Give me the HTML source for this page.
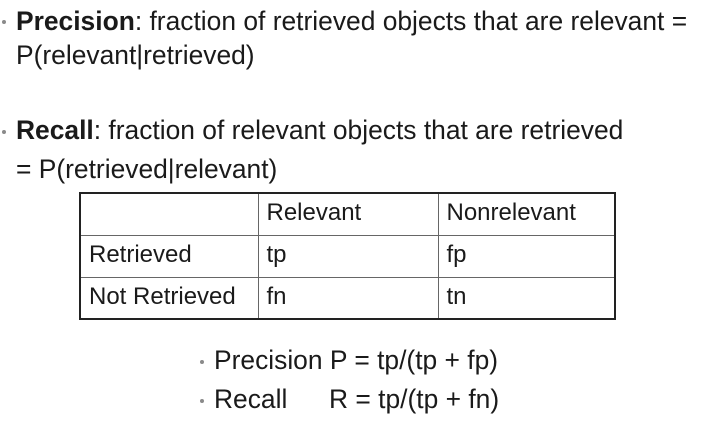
<!DOCTYPE html>
<html><head><style>
body{margin:0;width:716px;height:429px;background:#fff;position:relative;overflow:hidden;font-family:"Liberation Sans",Arial,sans-serif;color:#1a1a1a}
.t{position:absolute;white-space:nowrap;font-size:26.4px;line-height:30px}
.b{position:absolute;width:4px;height:4px;border-radius:50%;background:#8a8a8a}
table{position:absolute;left:79px;top:192px;border-collapse:collapse;border:2px solid #222;font-size:24px}
td{border:1px solid #666;height:42px;padding:0 0 2px 8px;vertical-align:middle;line-height:26px;box-sizing:border-box}
td:nth-child(1){width:178px}
td:nth-child(2){width:180px}
td:nth-child(3){width:177px}
</style></head><body>
<div class="b" style="left:2px;top:20px"></div>
<div class="t" style="left:16px;top:6px"><b>Precision</b>: fraction of retrieved objects that are relevant =</div>
<div class="t" style="left:16px;top:40px">P(relevant|retrieved)</div>
<div class="b" style="left:2px;top:130px"></div>
<div class="t" style="left:16px;top:115px"><b>Recall</b>: fraction of relevant objects that are retrieved</div>
<div class="t" style="left:16px;top:154px">= P(retrieved|relevant)</div>
<table>
<tr><td></td><td>Relevant</td><td>Nonrelevant</td></tr>
<tr><td>Retrieved</td><td>tp</td><td>fp</td></tr>
<tr><td>Not Retrieved</td><td>fn</td><td>tn</td></tr>
</table>
<div class="b" style="left:200px;top:360px"></div>
<div class="t" style="left:214px;top:345px">Precision P = tp/(tp + fp)</div>
<div class="b" style="left:200px;top:399px"></div>
<div class="t" style="left:214px;top:384px">Recall</div>
<div class="t" style="left:329px;top:384px">R = tp/(tp + fn)</div>
</body></html>
